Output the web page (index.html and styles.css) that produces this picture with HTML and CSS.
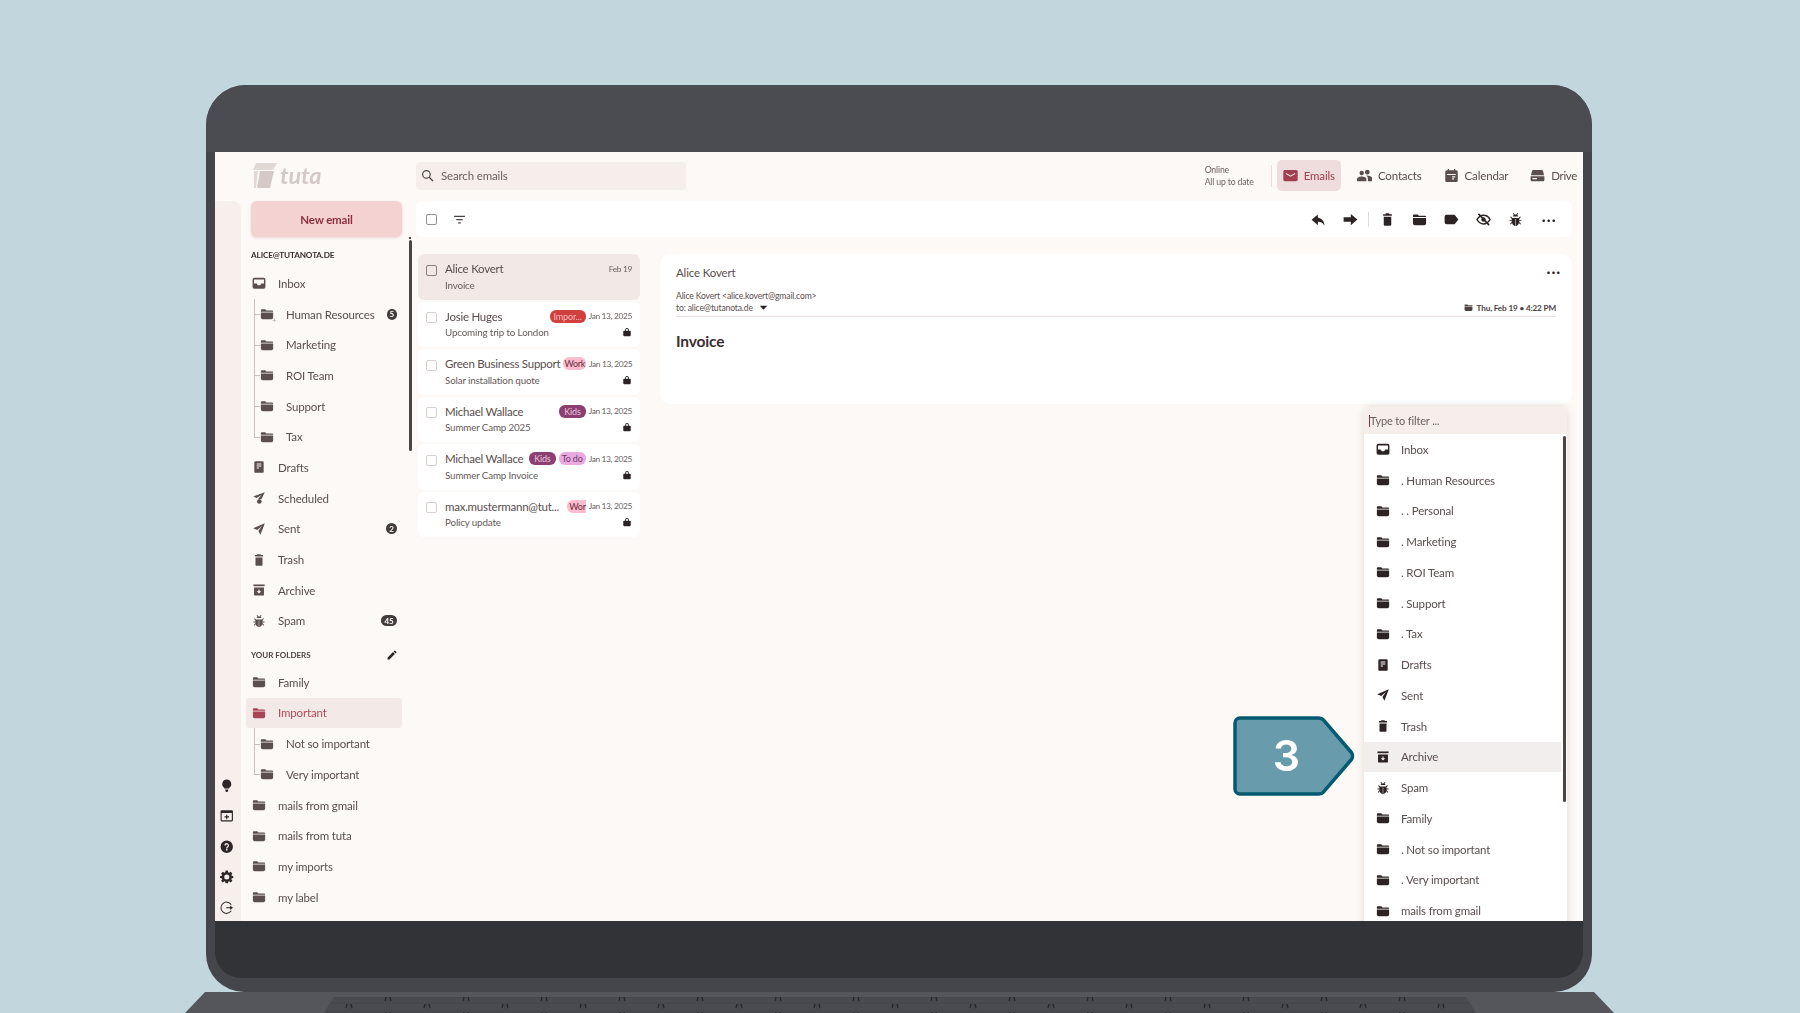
FILE: index.html
```html
<!DOCTYPE html>
<html lang="en">
<head>
    <meta charset="UTF-8">
    <title>Tuta Mail - move to Archive</title>
    <link rel="stylesheet" href="styles.css">
</head>
<body>
    <svg class="sprite" width="0" height="0">
        <symbol id="i-inbox" viewBox="0 0 24 24"><path fill-rule="evenodd" d="M4 3h16a3 3 0 0 1 3 3v13a3 3 0 0 1-3 3H4a3 3 0 0 1-3-3V6a3 3 0 0 1 3-3zm-.5 3v7H8l2 3h4l2-3h4.500V6z"/></symbol>
        <symbol id="i-folder" viewBox="0 0 24 24"><path d="M3 4h6l2 2h10a1.500 1.500 0 0 1 1.500 1.500V8h-21V5.500A1.500 1.500 0 0 1 3 4z"/><path d="M1.500 9.500h21V18a3 3 0 0 1-3 3h-15a3 3 0 0 1-3-3z"/></symbol>
        <symbol id="i-drafts" viewBox="0 0 24 24"><path fill-rule="evenodd" d="M6 2h12a2 2 0 0 1 2 2v16a2 2 0 0 1-2 2H6a2 2 0 0 1-2-2V4a2 2 0 0 1 2-2zm2 4v1.500h8V6zm0 3.500V11h8V9.500zM8 13v1.500h4V13z"/></symbol>
        <symbol id="i-sent" viewBox="0 0 24 24"><path d="M22 2 2 10.500l7 3L17 7l-6 8.500L14.500 22z"/></symbol>
        <symbol id="i-sched" viewBox="0 0 24 24"><path d="M22 2 2 9.500l6 2.500 8-5-5.500 6.500L12 15a5 5 0 0 1 4-1z"/><circle cx="12.500" cy="18" r="4"/></symbol>
        <symbol id="i-trash" viewBox="0 0 24 24"><path d="M9 2h6v1.500h4V6H5V3.500h4z"/><path d="M6 7.500h12V20a2 2 0 0 1-2 2H8a2 2 0 0 1-2-2z"/></symbol>
        <symbol id="i-archive" viewBox="0 0 24 24"><path d="M2.500 2.500h19v3h-19z"/><path fill-rule="evenodd" d="M3.500 7.500h17V20a1.500 1.500 0 0 1-1.500 1.500H5A1.500 1.500 0 0 1 3.500 20zM11 11v3H8l4 4 4-4h-3v-3z"/></symbol>
        <symbol id="i-bug" viewBox="0 0 24 24"><path d="M9 1.500l2 2.700a6 6 0 0 1 2 0l2-2.700 1.300 1-1.700 2.300c.8.500 1.400 1.300 1.700 2.200H7.700c.3-.9.900-1.700 1.700-2.200L7.700 2.500zM3.500 8l1.300-.8L7 9.500h10l2.200-2.300 1.300.8L18 11v2h3.500v1.500H18v1.500l3 3-1.200 1-2.300-2.300C16.600 20.500 14.500 22.500 12.400 22.500V11h-.8v11.500c-2.100 0-4.200-2-5.100-4.800L4.200 20 3 19l3-3v-1.500H2.500V13H6v-2z"/></symbol>
        <symbol id="i-edit" viewBox="0 0 24 24"><path d="M3 17.250V21h3.750L17.810 9.940l-3.750-3.750L3 17.250zM20.710 7.040c.39-.39.39-1.020 0-1.410l-2.340-2.340c-.39-.39-1.020-.39-1.410 0l-1.830 1.830 3.750 3.750 1.830-1.830z"/></symbol>
        <symbol id="i-reply" viewBox="0 0 24 24"><path d="M11 4 1 12.500 11 21v-5.500c4.500 0 8 1.500 10.500 6.500 0-7-3.500-12-10.500-13z"/></symbol>
        <symbol id="i-forward" viewBox="0 0 24 24"><path d="M12.500 3 23 12l-10.500 9v-5.500H1v-7h11.500z"/></symbol>
        <symbol id="i-label" viewBox="0 0 24 24"><path d="M4 4.500h12a2 2 0 0 1 1.600.8L23 12l-5.400 6.700a2 2 0 0 1-1.600.8H4A3 3 0 0 1 1 16.500v-9a3 3 0 0 1 3-3z"/></symbol>
        <symbol id="i-eyeoff" viewBox="0 0 24 24"><path fill="none" stroke="currentColor" stroke-width="2.400" d="M1.500 12S5.500 5 12 5s10.500 7 10.500 7-4 7-10.500 7S1.500 12 1.500 12z"/><circle cx="12" cy="12" r="3.500"/><path fill="none" stroke="currentColor" stroke-width="2.600" d="M4 3l17 18"/></symbol>
        <symbol id="i-search" viewBox="0 0 24 24"><circle cx="10" cy="10" r="7" fill="none" stroke="currentColor" stroke-width="2.200"/><path fill="none" stroke="currentColor" stroke-width="2.400" d="M15 15l7 7"/></symbol>
        <symbol id="i-filter" viewBox="0 0 24 24"><path d="M2 5h20v2.500H2zM6 11h12v2.500H6zM9.500 17h5v2.500h-5z"/></symbol>
        <symbol id="i-lock" viewBox="0 0 24 24"><path fill-rule="evenodd" d="M7.500 9V7a4.500 4.500 0 0 1 9 0v2H19a2 2 0 0 1 2 2v9a2 2 0 0 1-2 2H5a2 2 0 0 1-2-2v-9a2 2 0 0 1 2-2zm2 0h5V7a2.500 2.500 0 0 0-5 0z"/></symbol>
        <symbol id="i-mail" viewBox="0 0 24 24"><path fill-rule="evenodd" d="M3 3h18a2.500 2.500 0 0 1 2.500 2.500v13A2.500 2.500 0 0 1 21 21H3a2.500 2.500 0 0 1-2.500-2.500v-13A2.500 2.500 0 0 1 3 3zm2 5-.8 1.400L12 14l7.800-4.600L19 8l-7 4z"/></symbol>
        <symbol id="i-people" viewBox="0 0 24 24"><path d="M16.500 10.500a3.800 3.800 0 1 0 0-7.600 3.800 3.800 0 0 0 0 7.600zm-9 1a3.500 3.500 0 1 0 0-7 3.500 3.500 0 0 0 0 7zm0 2c-3 0-7.500 1.400-7.500 4V21h15v-3.500c0-2.600-4.500-4-7.500-4zm9-1.500c-.5 0-1 .04-1.500.1 1.600 1.200 2.500 3 2.500 5.400V21h7v-4c0-3-5-5-8-5z"/></symbol>
        <symbol id="i-calendar" viewBox="0 0 24 24"><path fill-rule="evenodd" d="M6 1.500h2v2h8v-2h2v2h1.500A2.500 2.500 0 0 1 22 6v14a2.500 2.500 0 0 1-2.500 2.500h-15A2.500 2.500 0 0 1 2 20V6a2.500 2.500 0 0 1 2.500-2.500H6zM5 9.500V11h14V9.500zM13 13v2h5v-2zm0 3.500v2h3v-2z"/></symbol>
        <symbol id="i-drive" viewBox="0 0 24 24"><path d="M6 3h12a3 3 0 0 1 3 2.500l1.500 6h-21L3 5.500A3 3 0 0 1 6 3z"/><path fill-rule="evenodd" d="M1 13h22v6a2 2 0 0 1-2 2H3a2 2 0 0 1-2-2zm3 3v2h7v-2z"/></symbol>
        <symbol id="i-bulb" viewBox="0 0 24 24"><path d="M12 1a8 8 0 0 0-4.500 14.600V17h9v-1.400A8 8 0 0 0 12 1z"/><path d="M9 18.500h6L13.500 23h-3z"/></symbol>
        <symbol id="i-addbox" viewBox="0 0 24 24"><path fill-rule="evenodd" d="M3 2h18a2 2 0 0 1 2 2v16a2 2 0 0 1-2 2H3a2 2 0 0 1-2-2V4a2 2 0 0 1 2-2zm0 5v13h18V7zm8 3h2v3h3v2h-3v3h-2v-3H8v-2h3z"/></symbol>
        <symbol id="i-help" viewBox="0 0 24 24"><path fill-rule="evenodd" d="M12 1a11 11 0 1 1 0 22 11 11 0 0 1 0-22zm-1.300 15v2.500h2.600V16zM12 5.500A4.300 4.300 0 0 0 7.700 9.800h2.500a1.800 1.800 0 1 1 3 1.300c-1.300 1.100-2.500 1.900-2.500 3.900h2.600c0-1.400 1-1.900 2-2.900A4.300 4.300 0 0 0 12 5.500z"/></symbol>
        <symbol id="i-gear" viewBox="0 0 24 24"><path fill-rule="evenodd" d="M10 1h4l.6 3.200 1.700.7L19 3l3 3-1.900 2.700.7 1.700L24 11v3l-3.200.6-.7 1.700L22 19l-3 3-2.700-1.900-1.700.7L14 24h-4l-.6-3.200-1.700-.7L5 22l-3-3 1.900-2.700-.7-1.700L0 14v-3l3.200-.6.7-1.700L2 6l3-3 2.700 1.900 1.700-.7zM12 8a4.500 4.500 0 1 0 0 9 4.500 4.500 0 0 0 0-9z"/></symbol>
        <symbol id="i-logout" viewBox="0 0 24 24"><path fill="none" stroke="currentColor" stroke-width="1.800" d="M20 6.500A10 10 0 1 0 20 17.500"/><path d="M11 11h7V8l5 4-5 4v-3h-7z"/></symbol>
        <symbol id="i-caret" viewBox="0 0 24 24"><path d="M2 7h20l-10 11z"/></symbol>
    </svg>

    <div class="lid">
        <div class="bezel-top"></div>
        <div class="screen">
            <div class="app">
                <header class="topbar">
                    <div class="logo">
                        <svg class="logo-box" viewBox="0 0 25 25"><path d="M3 0h21l-4 7H0z" fill="#e2d9d7"/><path d="M1 8h4l-2 17H1z" fill="#e2d9d7"/><path d="M7 8h14l-4 17H4z"/></svg>
                        <span class="logo-word">tuta</span>
                    </div>
                    <div class="search">
                        <svg class="icon"><use href="#i-search"/></svg>
                        <span>Search emails</span>
                    </div>
                    <div class="status">Online<br>All up to date</div>
                    <nav class="nav">
                        <a class="nav-item active"><svg class="icon"><use href="#i-mail"/></svg>Emails</a>
                        <a class="nav-item"><svg class="icon"><use href="#i-people"/></svg>Contacts</a>
                        <a class="nav-item"><svg class="icon"><use href="#i-calendar"/></svg>Calendar</a>
                        <a class="nav-item drive"><svg class="icon"><use href="#i-drive"/></svg>Drive</a>
                    </nav>
                </header>

                <div class="workspace">
                    <aside class="rail">
                        <svg class="icon"><use href="#i-bulb"/></svg>
                        <svg class="icon"><use href="#i-addbox"/></svg>
                        <svg class="icon"><use href="#i-help"/></svg>
                        <svg class="icon"><use href="#i-gear"/></svg>
                        <svg class="icon"><use href="#i-logout"/></svg>
                    </aside>

                    <aside class="sidebar">
                        <div class="new-email">New email</div>
                        <div class="account">ALICE@TUTANOTA.DE</div>
                        <div class="row"><svg class="icon"><use href="#i-inbox"/></svg>Inbox</div>
                        <div class="row child"><svg class="icon"><use href="#i-folder"/></svg><span class="add-mark">+</span>Human Resources<span class="count">5</span></div>
                        <div class="row child"><svg class="icon"><use href="#i-folder"/></svg>Marketing</div>
                        <div class="row child"><svg class="icon"><use href="#i-folder"/></svg>ROI Team</div>
                        <div class="row child"><svg class="icon"><use href="#i-folder"/></svg>Support</div>
                        <div class="row child last"><svg class="icon"><use href="#i-folder"/></svg>Tax</div>
                        <div class="row"><svg class="icon"><use href="#i-drafts"/></svg>Drafts</div>
                        <div class="row"><svg class="icon"><use href="#i-sched"/></svg>Scheduled</div>
                        <div class="row"><svg class="icon"><use href="#i-sent"/></svg>Sent<span class="count">2</span></div>
                        <div class="row"><svg class="icon"><use href="#i-trash"/></svg>Trash</div>
                        <div class="row"><svg class="icon"><use href="#i-archive"/></svg>Archive</div>
                        <div class="row"><svg class="icon"><use href="#i-bug"/></svg>Spam<span class="count wide">45</span></div>
                        <div class="row section">YOUR FOLDERS<svg class="icon"><use href="#i-edit"/></svg></div>
                        <div class="row"><svg class="icon"><use href="#i-folder"/></svg>Family</div>
                        <div class="row selected"><svg class="icon"><use href="#i-folder"/></svg>Important</div>
                        <div class="row child"><svg class="icon"><use href="#i-folder"/></svg>Not so important</div>
                        <div class="row child last"><svg class="icon"><use href="#i-folder"/></svg>Very important</div>
                        <div class="row"><svg class="icon"><use href="#i-folder"/></svg>mails from gmail</div>
                        <div class="row"><svg class="icon"><use href="#i-folder"/></svg>mails from tuta</div>
                        <div class="row"><svg class="icon"><use href="#i-folder"/></svg>my imports</div>
                        <div class="row"><svg class="icon"><use href="#i-folder"/></svg>my label</div>
                        <div class="side-scroll"></div>
                    </aside>

                    <main class="content">
                        <div class="toolbar">
                            <span class="check"></span>
                            <svg class="icon filter"><use href="#i-filter"/></svg>
                            <div class="actions">
                                <span class="action"><svg class="icon"><use href="#i-reply"/></svg></span>
                                <span class="action"><svg class="icon"><use href="#i-forward"/></svg></span>
                                <span class="action-sep"></span>
                                <span class="action"><svg class="icon"><use href="#i-trash"/></svg></span>
                                <span class="action"><svg class="icon"><use href="#i-folder"/></svg></span>
                                <span class="action"><svg class="icon"><use href="#i-label"/></svg></span>
                                <span class="action"><svg class="icon"><use href="#i-eyeoff"/></svg></span>
                                <span class="action"><svg class="icon"><use href="#i-bug"/></svg></span>
                                <span class="action dots">&middot;&middot;&middot;</span>
                            </div>
                        </div>

                        <div class="panes">
                            <section class="mail-list">
                                <div class="mail current">
                                    <span class="check"></span>
                                    <div class="mail-body">
                                        <div class="mail-top"><span class="sender">Alice Kovert</span><span class="date">Feb 19</span></div>
                                        <div class="mail-sub">Invoice</div>
                                    </div>
                                </div>
                                <div class="mail">
                                    <span class="check"></span>
                                    <div class="mail-body">
                                        <div class="mail-top"><span class="sender">Josie Huges</span><span class="tag red">Impor...</span><span class="date">Jan 13, 2025</span></div>
                                        <div class="mail-sub">Upcoming trip to London<svg class="icon lock"><use href="#i-lock"/></svg></div>
                                    </div>
                                </div>
                                <div class="mail">
                                    <span class="check"></span>
                                    <div class="mail-body">
                                        <div class="mail-top"><span class="sender">Green Business Support</span><span class="tag pink">Work</span><span class="date">Jan 13, 2025</span></div>
                                        <div class="mail-sub">Solar installation quote<svg class="icon lock"><use href="#i-lock"/></svg></div>
                                    </div>
                                </div>
                                <div class="mail">
                                    <span class="check"></span>
                                    <div class="mail-body">
                                        <div class="mail-top"><span class="sender">Michael Wallace</span><span class="tag plum">Kids</span><span class="date">Jan 13, 2025</span></div>
                                        <div class="mail-sub">Summer Camp 2025<svg class="icon lock"><use href="#i-lock"/></svg></div>
                                    </div>
                                </div>
                                <div class="mail">
                                    <span class="check"></span>
                                    <div class="mail-body">
                                        <div class="mail-top"><span class="sender">Michael Wallace</span><span class="tag plum">Kids</span><span class="tag orchid">To do</span><span class="date">Jan 13, 2025</span></div>
                                        <div class="mail-sub">Summer Camp Invoice<svg class="icon lock"><use href="#i-lock"/></svg></div>
                                    </div>
                                </div>
                                <div class="mail">
                                    <span class="check"></span>
                                    <div class="mail-body">
                                        <div class="mail-top"><span class="sender">max.mustermann@tut...</span><span class="tag pink cut">Wor</span><span class="date">Jan 13, 2025</span></div>
                                        <div class="mail-sub">Policy update<svg class="icon lock"><use href="#i-lock"/></svg></div>
                                    </div>
                                </div>
                            </section>

                            <article class="view">
                                <div class="view-name">Alice Kovert<span class="view-dots">&middot;&middot;&middot;</span></div>
                                <div class="view-from">Alice Kovert &lt;alice.kovert@gmail.com&gt;</div>
                                <div class="view-to">
                                    <span>to: alice@tutanota.de</span>
                                    <svg class="icon caret"><use href="#i-caret"/></svg>
                                    <span class="view-date"><svg class="icon"><use href="#i-folder"/></svg>Thu, Feb 19 &bull; 4:22 PM</span>
                                </div>
                                <h1 class="view-subject">Invoice</h1>
                            </article>
                        </div>
                    </main>
                </div>

                <div class="picker">
                    <div class="picker-input"><span class="cursor"></span>Type to filter ...</div>
                    <div class="picker-row"><svg class="icon"><use href="#i-inbox"/></svg>Inbox</div>
                    <div class="picker-row"><svg class="icon"><use href="#i-folder"/></svg>. Human Resources</div>
                    <div class="picker-row"><svg class="icon"><use href="#i-folder"/></svg>. . Personal</div>
                    <div class="picker-row"><svg class="icon"><use href="#i-folder"/></svg>. Marketing</div>
                    <div class="picker-row"><svg class="icon"><use href="#i-folder"/></svg>. ROI Team</div>
                    <div class="picker-row"><svg class="icon"><use href="#i-folder"/></svg>. Support</div>
                    <div class="picker-row"><svg class="icon"><use href="#i-folder"/></svg>. Tax</div>
                    <div class="picker-row"><svg class="icon"><use href="#i-drafts"/></svg>Drafts</div>
                    <div class="picker-row"><svg class="icon"><use href="#i-sent"/></svg>Sent</div>
                    <div class="picker-row"><svg class="icon"><use href="#i-trash"/></svg>Trash</div>
                    <div class="picker-row hover"><svg class="icon"><use href="#i-archive"/></svg>Archive</div>
                    <div class="picker-row"><svg class="icon"><use href="#i-bug"/></svg>Spam</div>
                    <div class="picker-row"><svg class="icon"><use href="#i-folder"/></svg>Family</div>
                    <div class="picker-row"><svg class="icon"><use href="#i-folder"/></svg>. Not so important</div>
                    <div class="picker-row"><svg class="icon"><use href="#i-folder"/></svg>. Very important</div>
                    <div class="picker-row"><svg class="icon"><use href="#i-folder"/></svg>mails from gmail</div>
                    <div class="picker-scroll"></div>
                </div>
            </div>

            <div class="step-badge">
                <svg viewBox="0 0 122 80"><path d="M7 2h79a6 6 0 0 1 4.600 2.200L118 36a6 6 0 0 1 0 8L90.600 75.800A6 6 0 0 1 86 78H7a5 5 0 0 1-5-5V7a5 5 0 0 1 5-5z"/></svg>
                <span>3</span>
            </div>
        </div>
        <div class="chin"></div>
    </div>

    <svg class="base" viewBox="0 0 1800 21">
        <defs>
            <pattern id="keys" width="78" height="15" patternUnits="userSpaceOnUse" x="2" y="5">
                <path d="M0 1h72v4H0zM-39 7h72v6h-72zM39 7h72v6H39z" fill="#4a4b50"/>
                <path d="M72 0l-1 4M76 0l1 4M33 7l-1 4M37 7l1 4" stroke="#222327" stroke-width="1.200"/>
            </pattern>
        </defs>
        <path d="M205 0H1594L1614 21H185z" fill="#55565b"/>
        <path d="M334 5H1466L1476 21H324z" fill="#47484d"/>
        <path d="M334 5H1466L1476 21H324z" fill="url(#keys)"/>
    </svg>
</body>
</html>
```

FILE: styles.css
```css
* { box-sizing: border-box; }
html, body { height: 100%; }
body {
    margin: 0;
    overflow: hidden;
    background: #c2d6dd;
    font-family: Lato, "Noto Sans", sans-serif;
    font-size: 11.500px;
    letter-spacing: -.15px;
    color: #5a4e4e;
}
.sprite { position: absolute; }
.icon {
    width: 14px;
    height: 14px;
    flex: none;
    fill: currentColor;
}

/* laptop */
.lid {
    width: 1386px;
    height: 907px;
    margin: 85px 0 0 206px;
    padding: 0 9px;
    background: #45464b;
    border-radius: 40px 40px 38px 38px;
}
.bezel-top { height: 67px; background: #4b4c51; margin: 0 -9px; border-radius: 40px 40px 0 0; }
.screen {
    position: relative;
    height: 769px;
    overflow: hidden;
    background: #fdf9f6;
}
.chin {
    height: 57px;
    background: #323336;
    border-radius: 0 0 26px 26px;
}
.base { display: block; width: 1800px; height: 21px; }
.app { height: 100%; filter: blur(.55px); }

/* top bar */
.topbar {
    display: flex;
    align-items: center;
    height: 49px;
    padding-bottom: 2px;
}
.logo {
    display: flex;
    align-items: center;
    gap: 2px;
    width: 201px;
    padding-left: 38px;
    flex: none;
}
.logo-box { width: 25px; height: 25px; fill: #d4c9c7; }
.logo-word {
    font-size: 23.500px;
    font-style: italic;
    font-weight: 700;
    color: #d4c9c7;
    line-height: 1;
}
.search {
    display: flex;
    align-items: center;
    gap: 7px;
    width: 270px;
    height: 28px;
    padding-left: 5px;
    background: #f6eeeb;
    border-radius: 4px;
    color: #6b5f5f;
}
.search .icon { width: 13px; height: 13px; color: #4d4343; }
.status {
    margin-left: auto;
    font-size: 8.700px;
    line-height: 12px;
    color: #6b5f5f;
    padding-right: 17px;
}
.nav {
    display: flex;
    gap: 10px;
    border-left: 1px solid #e6dcda;
    padding-left: 5px;
    height: 22px;
    align-items: center;
}
.nav-item {
    display: flex;
    align-items: center;
    gap: 6px;
    height: 31px;
    padding: 0 6px;
    border-radius: 5px;
    color: #5a4e4e;
}
.nav-item .icon { width: 15px; height: 15px; }
.nav-item.active { background: #efdcdc; color: #a03f4f; }
.nav-item.drive { letter-spacing: -.35px; }

/* workspace */
.workspace { display: flex; height: 720px; }
.rail {
    display: flex;
    flex-direction: column;
    justify-content: flex-end;
    align-items: center;
    gap: 17px;
    width: 26px;
    padding: 0 2px 7px 0;
    background: #f7efec;
    border-top-right-radius: 8px;
    color: #2e2626;
    flex: none;
}
.rail .icon { width: 13.500px; height: 13.500px; }
.sidebar {
    position: relative;
    width: 175px;
    padding-left: 5px;
    flex: none;
}
.new-email {
    display: flex;
    align-items: center;
    justify-content: center;
    width: 151px;
    height: 36px;
    margin-left: 5px;
    background: #f4d2d2;
    border-radius: 6px;
    box-shadow: 0 1px 3px rgba(120,60,60,.18);
    font-weight: 700;
    color: #8e2f3e;
}
.account {
    height: 31px;
    margin-left: 5px;
    line-height: 37px;
    font-size: 8.200px;
    font-weight: 700;
    color: #3a3030;
}
.row {
    position: relative;
    display: flex;
    align-items: center;
    gap: 12px;
    width: 156px;
    height: 30.700px;
    padding: 0 5px 0 6px;
    border-radius: 3px;
    white-space: nowrap;
}
.row .icon { color: #5a4e4e; }
.row.child { padding-left: 14px; }
.row.child::before {
    content: "";
    position: absolute;
    left: 8px;
    top: 0;
    bottom: 0;
    width: 1px;
    background: #c9c0be;
}
.row.child::after {
    content: "";
    position: absolute;
    left: 8px;
    top: 50%;
    width: 6px;
    height: 1px;
    background: #c9c0be;
}
.row.child.last::before { bottom: 50%; }
.row.selected { background: #f3eae8; color: #b24a5b; }
.row.selected .icon { color: #a94455; }
.row.section {
    justify-content: space-between;
    padding-left: 5px;
    padding-right: 4px;
    padding-top: 6px;
    font-size: 8px;
    font-weight: 700;
    letter-spacing: 0;
    color: #4d4343;
}
.row.section .icon { width: 12px; height: 12px; color: #2e2626; }
.add-mark {
    position: absolute;
    left: 26px;
    top: 17px;
    font-size: 8px;
    line-height: 8px;
    color: #b5aaa8;
}
.count {
    display: flex;
    align-items: center;
    justify-content: center;
    width: 11px;
    height: 11px;
    margin-left: auto;
    background: #453c3c;
    border-radius: 6px;
    color: #fff;
    font-size: 8px;
    font-weight: 700;
}
.count.wide { width: 16px; }
.side-scroll {
    position: absolute;
    left: 168px;
    top: 39px;
    width: 3px;
    height: 211px;
    background: #4f4444;
    border-radius: 2px;
}
.side-scroll::before {
    content: "";
    position: absolute;
    left: 0;
    top: -3px;
    width: 2px;
    height: 2px;
    background: #4f4444;
}

/* content */
.content { flex: 1; min-width: 0; padding-right: 11px; }
.toolbar {
    display: flex;
    align-items: center;
    gap: 16px;
    height: 36px;
    padding: 0 9px 0 10px;
    background: #fff;
    border-radius: 6px;
}
.check {
    display: block;
    width: 11px;
    height: 11px;
    flex: none;
    border: 1px solid #9a8f8f;
    border-radius: 2px;
}
.filter { width: 13px; height: 13px; color: #4d4343; }
.actions { display: flex; align-items: center; margin-left: auto; color: #2c2424; }
.action {
    display: flex;
    align-items: center;
    justify-content: center;
    width: 32px;
    height: 24px;
}
.action .icon { width: 15px; height: 15px; }
.action-sep { width: 1px; height: 15px; margin: 0 2px; background: #e3dad8; }
.dots { font-size: 17px; letter-spacing: .5px; padding-left: 4px; }
.panes { display: flex; gap: 20px; padding: 17px 0 0 2px; }
.mail-list { display: flex; flex-direction: column; gap: 2px; width: 222px; flex: none; }
.mail {
    display: flex;
    gap: 8px;
    height: 45.500px;
    padding: 7.500px 8px 0;
    background: #fff;
    border-radius: 6px;
}
.mail.current { background: #f2e9e7; }
.mail .check { margin-top: 3px; border-color: #d8d0ce; }
.mail.current .check { border-color: #8a7e7e; }
.mail-body { flex: 1; min-width: 0; }
.mail-top { display: flex; align-items: center; gap: 3px; height: 14px; }
.sender { margin-right: auto; white-space: nowrap; letter-spacing: -.25px; }
.date { font-size: 8.400px; letter-spacing: -.35px; color: #6b5f5f; white-space: nowrap; }
.tag {
    padding: 0 3px;
    height: 13px;
    line-height: 13px;
    border-radius: 6px;
    font-size: 9px;
    white-space: nowrap;
}
.tag.red { background: #d13f3f; color: #f4bcbc; padding: 0 4px; }
.tag.pink { background: #fdbdcf; color: #6a2c3d; padding: 0 1px; letter-spacing: -.3px; }
.tag.cut { border-radius: 6px 0 0 6px; padding: 0 0 0 2px; }
.tag.plum { background: #8c3f70; color: #eac3dc; padding: 0 5px; }
.tag.orchid { background: #e9aae2; color: #703a68; }
.mail-sub {
    display: flex;
    align-items: center;
    justify-content: space-between;
    height: 14px;
    margin-top: 2px;
    font-size: 9.800px;
    color: #665a5a;
}
.lock { width: 10px; height: 10px; color: #2c2424; }

/* email view */
.view {
    flex: 1;
    height: 150px;
    padding: 11px 16px 0;
    background: #fff;
    border-radius: 10px;
}
.view-name { display: flex; justify-content: space-between; height: 16px; line-height: 16px; }
.view-dots { font-size: 17px; letter-spacing: .5px; color: #2c2424; line-height: 13px; margin-right: -5px; }
.view-from { margin-top: 9px; font-size: 8.600px; line-height: 12px; color: #5a4e4e; }
.view-to {
    display: flex;
    align-items: center;
    gap: 6px;
    height: 15px;
    padding-bottom: 3px;
    border-bottom: 1px solid #e6dfde;
    font-size: 8.600px;
}
.caret { width: 9px; height: 9px; color: #2c2424; }
.view-date {
    display: flex;
    align-items: center;
    gap: 4px;
    margin-left: auto;
    font-size: 8.200px;
    font-weight: 700;
    color: #4d4343;
}
.view-date .icon { width: 9px; height: 9px; }
.view-subject { margin: 15px 0 0; font-size: 15.500px; line-height: 18px; font-weight: 700; color: #3a3030; }

/* move-to-folder dropdown */
.picker {
    position: absolute;
    left: 1149px;
    top: 255px;
    width: 203px;
    height: 600px;
    background: #fff;
    border-radius: 6px 6px 0 0;
    box-shadow: 0 0 8px rgba(90,60,60,.16);
}
.picker-input {
    display: flex;
    align-items: center;
    height: 27px;
    padding-left: 5px;
    background: #f6eeeb;
    border-radius: 6px 6px 0 0;
    font-size: 11px;
    color: #6b5f5f;
}
.cursor { width: 1px; height: 12px; background: #8e2f3e; }
.picker-row {
    display: flex;
    align-items: center;
    gap: 11px;
    width: 197px;
    height: 30.750px;
    padding-left: 12px;
}
.picker-row .icon { color: #2c2424; }
.picker-row.hover { background: #f3eeee; }
.picker-scroll {
    position: absolute;
    left: 199px;
    top: 29px;
    width: 3px;
    height: 366px;
    background: #4f4444;
    border-radius: 2px;
}

/* tutorial step marker */
.step-badge {
    position: absolute;
    left: 1018px;
    top: 564px;
    width: 122px;
    height: 80px;
}
.step-badge svg { display: block; width: 100%; height: 100%; fill: #689cad; stroke: #045a70; stroke-width: 3.500; }
.step-badge span {
    position: absolute;
    left: 0;
    top: 0;
    width: 107px;
    line-height: 78px;
    text-align: center;
    font-family: Inter, sans-serif;
    font-size: 43px;
    font-weight: 600;
    letter-spacing: 0;
    color: #fff;
}
```
